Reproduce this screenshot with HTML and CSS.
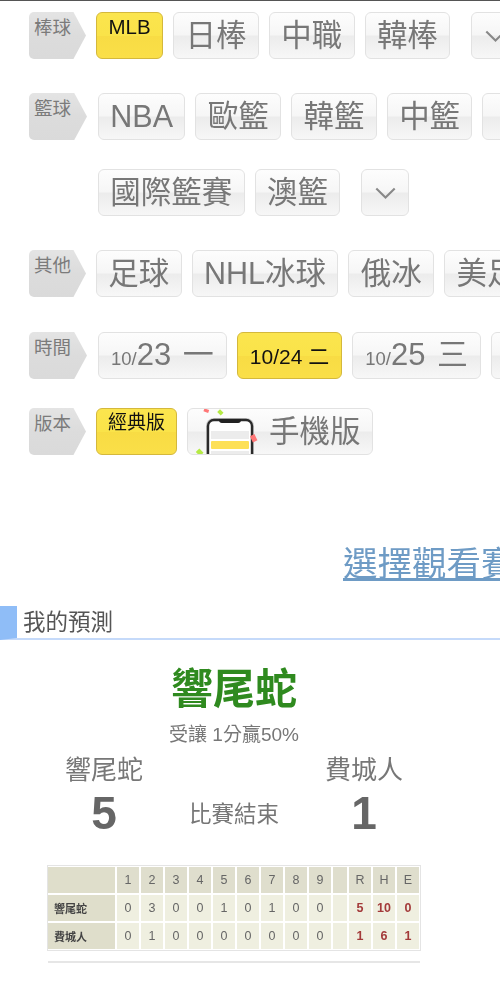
FILE: index.html
```html
<!DOCTYPE html>
<html lang="zh-Hant">
<head>
<meta charset="utf-8">
<title>我的預測</title>
<link rel="stylesheet" href="styles.css">
</head>
<body>
<main class="page">
  <nav class="filters">
    <div class="row row-a">
      <div class="tag">棒球</div>
      <div class="lines">
        <div class="line">
          <a class="btn on">MLB</a><a class="btn">日棒</a><a class="btn">中職</a><a class="btn">韓棒</a>
          <a class="btn more far"><svg class="chev" viewBox="0 0 20 12"><path d="M2 2l8 8 8-8"/></svg></a>
        </div>
      </div>
    </div>
    <div class="row row-b">
      <div class="tag wide">籃球</div>
      <div class="lines">
        <div class="line">
          <a class="btn">NBA</a><a class="btn">歐籃</a><a class="btn">韓籃</a><a class="btn">中籃</a><a class="btn">日籃</a>
        </div>
        <div class="line">
          <a class="btn">國際籃賽</a><a class="btn">澳籃</a>
          <a class="btn more far"><svg class="chev" viewBox="0 0 20 12"><path d="M2 2l8 8 8-8"/></svg></a>
        </div>
      </div>
    </div>
    <div class="row row-c">
      <div class="tag">其他</div>
      <div class="lines">
        <div class="line">
          <a class="btn">足球</a><a class="btn">NHL冰球</a><a class="btn">俄冰</a><a class="btn">美足</a>
        </div>
      </div>
    </div>
    <div class="row row-d">
      <div class="tag wide">時間</div>
      <div class="lines">
        <div class="line">
          <a class="btn date"><small>10/</small>23 一</a><a class="btn date-on">10/24 二</a><a class="btn date"><small>10/</small>25 三</a><a class="btn date"><small>10/</small>26 四</a>
        </div>
      </div>
    </div>
    <div class="row row-e">
      <div class="tag">版本</div>
      <div class="lines">
        <div class="line">
          <a class="btn on">經典版</a>
          <a class="btn mobile">
            <svg class="phone" viewBox="0 0 74 46">
              <rect class="phone-shade" x="18" y="9" width="48" height="46" rx="8"/>
              <rect class="phone-body" x="20" y="11" width="44" height="44" rx="6"/>
              <path class="phone-notch" d="M31 10h22v2a3 3 0 0 1-3 2H34a3 3 0 0 1-3-2z"/>
              <rect class="phone-band" x="23" y="22" width="38" height="8"/>
              <rect class="phone-bar" x="23" y="32" width="38" height="8" rx="1"/>
              <rect class="phone-band" x="23" y="42" width="38" height="4"/>
              <rect class="bit-red" x="16" y="0" width="5" height="3" transform="rotate(20 18 1)"/>
              <rect class="bit-green" x="30" y="1" width="5" height="4" transform="rotate(45 32 3)"/>
              <rect class="bit-red" x="63" y="26" width="5" height="7" transform="rotate(-25 65 29)"/>
              <rect class="bit-green" x="9" y="41" width="6" height="5" transform="rotate(45 12 43)"/>
            </svg>
            手機版
          </a>
        </div>
      </div>
    </div>
  </nav>

  <div class="watch"><a href="#">選擇觀看賽事</a></div>

  <h2 class="head">我的預測</h2>

  <section class="pick">
    <div class="pick-name">響尾蛇</div>
    <div class="pick-note">受讓 1分贏50%</div>
  </section>

  <section class="score">
    <div class="team">響尾蛇</div>
    <div></div>
    <div class="team">費城人</div>
    <div class="num">5</div>
    <div class="state">比賽結束</div>
    <div class="num">1</div>
  </section>

  <div class="box-wrap">
    <table class="box">
      <tr class="top">
        <th class="name"></th><th>1</th><th>2</th><th>3</th><th>4</th><th>5</th><th>6</th><th>7</th><th>8</th><th>9</th><th class="blank"></th><th>R</th><th>H</th><th>E</th>
      </tr>
      <tr>
        <th class="name">響尾蛇</th><td>0</td><td>3</td><td>0</td><td>0</td><td>1</td><td>0</td><td>1</td><td>0</td><td>0</td><td class="blank"></td><td class="tot">5</td><td class="tot">10</td><td class="tot">0</td>
      </tr>
      <tr>
        <th class="name">費城人</th><td>0</td><td>1</td><td>0</td><td>0</td><td>0</td><td>0</td><td>0</td><td>0</td><td>0</td><td class="blank"></td><td class="tot">1</td><td class="tot">6</td><td class="tot">1</td>
      </tr>
    </table>
  </div>
  <div class="rule"></div>
</main>
</body>
</html>
```
FILE: styles.css
```css
* { box-sizing: border-box; }
html, body { margin: 0; padding: 0; background: #fff; }
body {
  font-family: "Liberation Sans", "Noto Sans CJK TC", sans-serif;
  color: #777;
}
.page {
  width: 500px;
  height: 1000px;
  overflow: hidden;
  border-top: 1px solid #555;
  filter: blur(0.35px);
}
.filters { display: flex; flex-direction: column; padding: 11px 0 0 29px; }
.row { display: flex; align-items: flex-start; }
.row-b { margin-top: 34px; }
.row-c { margin-top: 34px; }
.row-d { margin-top: 35px; }
.row-e { margin-top: 29px; }
.tag {
  flex: none;
  width: 57px;
  height: 47px;
  margin-right: 10px;
  padding: 5px 0 0 5px;
  font-size: 18.5px;
  line-height: 21px;
  color: #7b7b7b;
  background: linear-gradient(#e4e4e4, #dcdcdc 50%, #dadada);
  border-radius: 5px 0 0 5px;
  clip-path: polygon(0 0, 78% 0, 100% 50%, 78% 100%, 0 100%);
}
.tag.wide { width: 58px; margin-right: 11px; }
.lines { display: flex; flex-direction: column; gap: 29px; }
.line { display: flex; align-items: flex-start; gap: 10px; white-space: nowrap; }
.btn {
  flex: none;
  display: block;
  height: 47px;
  padding: 0 11.35px;
  font-size: 30.5px;
  line-height: 44px;
  color: #777;
  border: 1px solid #e2e2e2;
  border-radius: 6px;
  background: linear-gradient(#fdfdfd, #f6f6f6 48%, #ececec 52%, #f7f7f7);
}
.btn.on, .btn.date-on {
  color: #111;
  border-color: #d4b83c;
  background: linear-gradient(#fbe54e, #fae349 50%, #f8dc44 52%, #fadf48);
}
.btn.on { padding: 0 11.5px; font-size: 20.5px; line-height: 28px; }
.row-e .btn.on { font-size: 19px; padding: 0 11px; }
.btn.date { padding: 0 12px; font-size: 31px; word-spacing: 3px; }
.btn.date small { font-size: 18.5px; }
.btn.date-on { padding: 0 12px; font-size: 21px; line-height: 47px; }
.btn.more { width: 48px; padding: 0; display: flex; align-items: center; justify-content: center; }
.btn.far { margin-left: 11px; }
.chev { width: 23px; height: 14px; fill: none; stroke: #888; stroke-width: 1.8; }
.btn.mobile { display: flex; align-items: flex-start; padding: 0 11px 0 0; overflow: hidden; }
.phone { flex: none; width: 74px; height: 46px; margin-right: 7px; }
.phone-shade { fill: #c4c4c4; }
.phone-body { fill: #fff; stroke: #2a2a2a; stroke-width: 2.4; }
.phone-notch { fill: #222; }
.phone-band { fill: #ececec; }
.phone-bar { fill: #fde056; }
.bit-red { fill: #f77; }
.bit-green { fill: #b5ea45; }

.watch { margin-top: 89px; padding-left: 343px; white-space: nowrap; font-size: 34.5px; line-height: 40px; }
.watch a { color: #6e9bc5; text-decoration: underline; }

.head {
  margin: 22px 0 0;
  height: 34px;
  padding-left: 6px;
  font-size: 22.5px;
  font-weight: 400;
  line-height: 33px;
  color: #555;
  border-bottom: 2px solid #c5dafa;
  border-left: 17px solid #8fbdf7;
}
.pick { width: 468px; margin-top: 24px; text-align: center; }
.pick-name { font-size: 42px; font-weight: 700; line-height: 52px; color: #2f8a1f; }
.pick-note { margin-top: 7px; font-size: 19px; line-height: 24px; color: #777; }
.score {
  display: grid;
  grid-template-columns: repeat(3, 130px);
  align-items: center;
  padding-left: 39px;
  margin-top: 6px;
  text-align: center;
}
.team { font-size: 26px; line-height: 34px; color: #777; }
.num { font-size: 46px; font-weight: 700; line-height: 52px; color: #666; }
.state { padding-top: 3px; font-size: 22.5px; line-height: 30px; color: #777; }

.box-wrap {
  width: 374px;
  height: 86px;
  margin: 26px 0 0 47px;
  overflow: hidden;
  border: 1px solid #e4e4e4;
}
.box {
  width: 375px;
  margin: -1px 0 0 -2px;
  table-layout: fixed;
  border-collapse: separate;
  border-spacing: 2px;
  font-size: 12.5px;
}
.box th, .box td { width: 22px; height: 26px; padding: 0; text-align: center; font-weight: 400; color: #666; background: #efefe0; }
.box .top th { background: #dfdecd; }
.box th.name { width: 67px; padding-left: 6px; text-align: left; font-size: 11px; font-weight: 700; color: #444; background: #dfdecb; }
.box .blank { width: 14px; }
.box td.tot { font-weight: 700; color: #a33a3a; }
.rule { width: 372px; height: 2px; margin: 10px 0 0 48px; background: #e6e6e6; }
```
